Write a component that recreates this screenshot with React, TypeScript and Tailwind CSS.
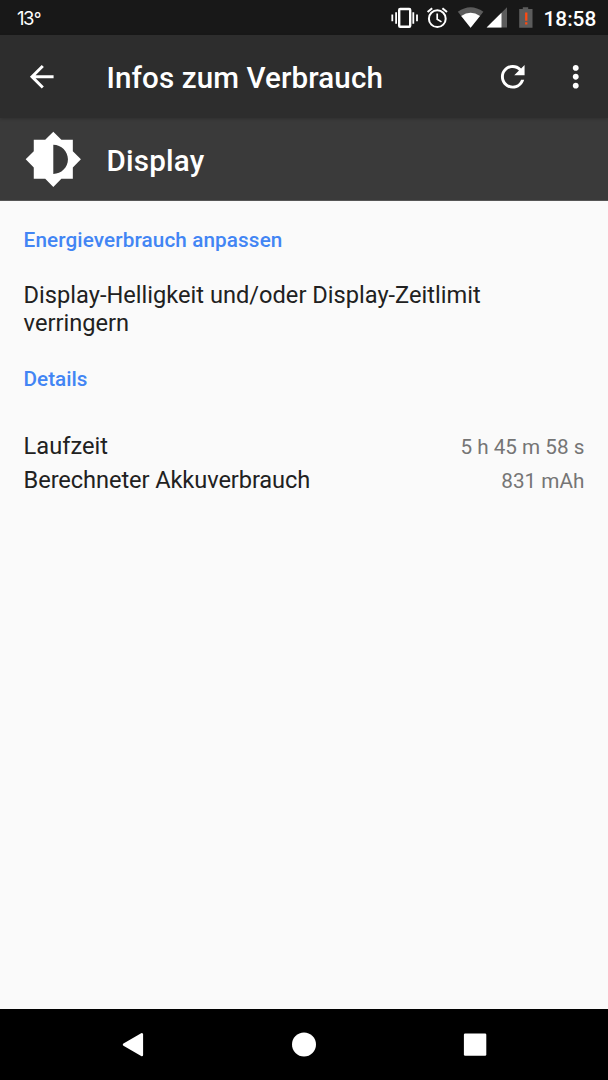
import type { ReactNode } from "react";

function Icon({ d, className }: { d: string; className: string }) {
  return (
    <svg viewBox="0 0 24 24" className={`shrink-0 fill-white ${className}`}>
      <path d={d} />
    </svg>
  );
}

const ARROW_BACK = "M20 11H7.83l5.59-5.59L12 4l-8 8 8 8 1.41-1.41L7.83 13H20v-2z";
const REFRESH =
  "M17.65 6.35A7.958 7.958 0 0 0 12 4c-4.42 0-7.99 3.58-7.99 8s3.57 8 7.99 8c3.73 0 6.84-2.55 7.73-6h-2.08A5.99 5.99 0 0 1 12 18c-3.31 0-6-2.69-6-6s2.69-6 6-6c1.66 0 3.14.69 4.22 1.78L13 11h7V4l-2.35 2.35z";
const MORE =
  "M12 8c1.1 0 2-.9 2-2s-.9-2-2-2-2 .9-2 2 .9 2 2 2zm0 2c-1.1 0-2 .9-2 2s.9 2 2 2 2-.9 2-2-.9-2-2-2zm0 6c-1.1 0-2 .9-2 2s.9 2 2 2 2-.9 2-2-.9-2-2-2z";
const BRIGHTNESS =
  "M20 15.31L23.31 12 20 8.69V4h-4.69L12 .69 8.69 4H4v4.69L.69 12 4 15.31V20h4.69L12 23.31 15.31 20H20v-4.69zM12 18V6c3.31 0 6 2.69 6 6s-2.69 6-6 6z";

function StatusIcons() {
  return (
    <svg width="150" height="35" viewBox="390 0 150 35" className="shrink-0" aria-hidden="true">
      <g fill="none" stroke="#fff" strokeWidth="1.8">
        <rect x="399.2" y="9" width="11" height="17.8" rx="1" strokeWidth="2.4" />
        <path d="M396.1 12.2v11.6M392.3 14.6v6.6M413.3 12.2v11.6M417 14.6v6.6" />
      </g>
      <g fill="none" stroke="#fff" strokeWidth="2">
        <circle cx="437.3" cy="18.7" r="8.4" />
        <path d="M437.2 13.6v5.6l4.3 2.7" strokeWidth="1.7" />
        <path d="M427.6 12.1l4.6-3.9M442.4 8.2l4.6 3.9" />
      </g>
      <path d="M457.8 11.8Q470.6 2.5 483.4 11.8L470.6 27.8z" fill="#5c5c5c" />
      <path d="M461.2 16Q470.6 9.4 480 16L470.6 27.8z" fill="#fff" />
      <path d="M507 7.2v20.4h-20.4z" fill="#5c5c5c" />
      <path d="M501.5 12.7v14.9h-14.9z" fill="#fff" />
      <path d="M519.2 9h3.6V7.2h5.4V9h4.3v18.8h-13.3z" fill="#5c5c5c" />
      <path d="M525.1 12.4h2.3v8.3h-2.3zM525.1 22.2h2.3v2.4h-2.3z" fill="#ff4b12" />
    </svg>
  );
}

function Category({ children, className = "" }: { children: ReactNode; className?: string }) {
  return (
    <h2 className={`text-[20.69px] leading-6 font-medium text-[#4285f4] ${className}`}>{children}</h2>
  );
}

function DetailRow({ label, value, className = "" }: { label: string; value: string; className?: string }) {
  return (
    <div className="flex h-[34px] items-baseline justify-between">
      <dt className={`text-[23.64px] leading-7 text-[#212121] ${className}`}>{label}</dt>
      <dd className="text-[20.69px] leading-7 text-[#757575]">{value}</dd>
    </div>
  );
}

export default function App() {
  return (
    <div className="flex h-[1080px] w-[608px] flex-col overflow-hidden bg-[#fafafa] font-['Roboto',sans-serif]">
      <div className="flex h-[35px] shrink-0 items-center bg-[#181818] text-white">
        <span className="flex-1 pt-px pl-[17px] font-['Inter',sans-serif] text-[18.5px] leading-none tracking-[-1.6px]">
          13<span className="pl-px text-[17px]">°</span>
        </span>
        <StatusIcons />
        <span className="w-[68px] pt-[3px] pl-[3.5px] text-[20.8px] leading-none font-medium">18:58</span>
      </div>

      <header className="z-10 flex h-[83px] shrink-0 items-center bg-[#2d2d2d] pl-[23.6px] text-white shadow-[0_1px_3px_rgba(0,0,0,0.2)]">
        <Icon d={ARROW_BACK} className="size-[35.5px]" />
        <h1 className="flex-1 pt-[5px] pl-[47.4px] text-[29.55px] leading-none font-medium tracking-[0.11px]">
          Infos zum Verbrauch
        </h1>
        <Icon d={REFRESH} className="size-[35.5px]" />
        <Icon d={MORE} className="mr-[14.6px] ml-[27px] size-[35.5px]" />
      </header>

      <div className="flex h-[83px] shrink-0 items-center border-b border-[#555] bg-[#3a3a3a] pl-[23.6px] text-white">
        <Icon d={BRIGHTNESS} className="size-[58.6px]" />
        <span className="pt-[5px] pl-[24.4px] text-[29.55px] leading-none font-medium tracking-[0.2px]">
          Display
        </span>
      </div>

      <main className="flex-1 pt-[27px] pr-[23.6px] pl-[23.6px]">
        <Category className="tracking-[0.12px]">Energieverbrauch anpassen</Category>
        <p className="pt-[30px] text-[23.64px] leading-[27.5px] text-[#212121]">
          Display-Helligkeit und/oder Display-Zeitlimit verringern
        </p>
        <Category className="mt-[30px]">Details</Category>
        <dl className="pt-[41px]">
          <DetailRow label="Laufzeit" value="5 h 45 m 58 s" />
          <DetailRow label="Berechneter Akkuverbrauch" value="831 mAh" className="tracking-[-0.09px]" />
        </dl>
      </main>

      <nav className="flex h-[71px] shrink-0 items-center justify-center gap-[135px] bg-black">
        <svg viewBox="0 0 36 36" className="size-9 fill-white stroke-white">
          <path d="M9.1 17.6L26.8 7.3v20.6z" strokeWidth="2.6" strokeLinejoin="round" />
        </svg>
        <svg viewBox="0 0 36 36" className="size-9 fill-white">
          <circle cx="18" cy="17.6" r="12" />
        </svg>
        <svg viewBox="0 0 36 36" className="size-9 fill-white">
          <rect x="6.9" y="6.4" width="22.4" height="22.4" rx="1.3" />
        </svg>
      </nav>
    </div>
  );
}
